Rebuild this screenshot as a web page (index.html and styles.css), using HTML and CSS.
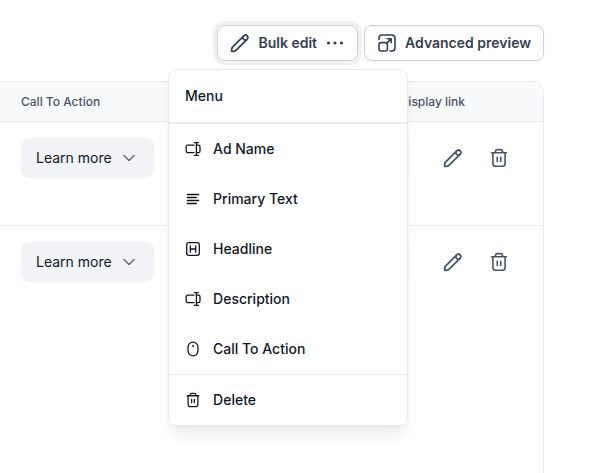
FILE: index.html
```html
<!DOCTYPE html>
<html lang="en">
<head>
    <meta charset="UTF-8">
    <meta name="viewport" content="width=device-width, initial-scale=1.0">
    <title>Bulk edit</title>
    <link rel="stylesheet" href="styles.css">
</head>
<body>
    <!-- Shared icons -->
    <svg class="sprite" aria-hidden="true">
        <symbol id="pencil" viewBox="0 0 20 20">
            <path d="M1.7 18.3V16.2Q1.8 14.8 2.8 13.8L13.8 2.8A2.4 2.4 0 0 1 17.2 6.2L6.2 17.2Q5.2 18.2 3.8 18.3Z"/>
            <path d="M12.9 3.7C12.6 6 14 7.4 16.3 7.1"/>
        </symbol>
        <symbol id="trash" viewBox="0 0 20 20">
            <path d="M2.6 4.7H17.4M6.4 4.5V3.8Q6.4 1.6 8.6 1.6H11.4Q13.6 1.6 13.6 3.8V4.5M3.9 4.9V15.5Q3.9 18.2 6.6 18.2H13.4Q16.1 18.2 16.1 15.5V4.9M8.3 9.2V13.4M11.7 9.2V13.4"/>
        </symbol>
        <symbol id="chevron" viewBox="0 0 20 20">
            <path d="M5 7.5 10 12.5 15 7.5"/>
        </symbol>
        <symbol id="text-input" viewBox="0 0 16 16">
            <path d="M9 4.2H2.8Q1.2 4.2 1.2 5.8V10Q1.2 11.6 2.8 11.6H9M11.4 1.6V14.4M9.4 1.6H13.4M9.4 14.4H13.4M11.6 4.2H13.4Q15 4.2 15 5.8V10Q15 11.6 13.4 11.6H11.6"/>
        </symbol>
    </svg>

    <div class="toolbar">
        <div class="dropdown">
            <button type="button" class="btn btn-active" aria-haspopup="menu" aria-expanded="true">
                <svg class="icon icon-bold"><use href="#pencil"/></svg>
                Bulk edit
                <svg class="icon dots" viewBox="0 0 20 20"><circle cx="3.5" cy="10" r="1.6"/><circle cx="10" cy="10" r="1.6"/><circle cx="16.5" cy="10" r="1.6"/></svg>
            </button>

            <div class="menu" role="menu">
                <div class="menu-title">Menu</div>
                <button type="button" class="menu-item" role="menuitem">
                    <svg class="icon-small"><use href="#text-input"/></svg>
                    Ad Name
                </button>
                <button type="button" class="menu-item" role="menuitem">
                    <svg class="icon-small" viewBox="0 0 16 16"><path d="M2.3 3.5H13.7M2.3 6.5H11.3M2.3 9.5H13.7M2.3 12.5H11.3"/></svg>
                    Primary Text
                </button>
                <button type="button" class="menu-item" role="menuitem">
                    <svg class="icon-small" viewBox="0 0 16 16"><rect x="1.7" y="1.7" width="12.6" height="12.6" rx="2"/><path d="M5.3 4.8V11.2M10.7 4.8V11.2M5.3 8H10.7"/></svg>
                    Headline
                </button>
                <button type="button" class="menu-item" role="menuitem">
                    <svg class="icon-small"><use href="#text-input"/></svg>
                    Description
                </button>
                <button type="button" class="menu-item" role="menuitem">
                    <svg class="icon-small" viewBox="0 0 16 16"><rect x="3" y="1.2" width="10" height="13.6" rx="5"/><path d="M8 4.3V5.7"/></svg>
                    Call To Action
                </button>
                <button type="button" class="menu-item menu-delete" role="menuitem">
                    <svg class="icon-small trash-small"><use href="#trash"/></svg>
                    Delete
                </button>
            </div>
        </div>

        <button type="button" class="btn">
            <svg class="icon" viewBox="0 0 20 20">
                <path d="M2 6.5V5.2Q2 2 5.2 2H14.8Q18 2 18 5.2V14.8Q18 18 14.8 18H13"/>
                <rect x="2" y="9.6" width="8.4" height="8.4" rx="2"/>
                <path d="M9.6 10.4 14.2 5.8M10.2 5.8H14.2V9.8"/>
            </svg>
            Advanced preview
        </button>
    </div>

    <div class="table-wrap">
        <table class="ads">
            <colgroup>
                <col class="col-cta">
                <col>
                <col class="col-actions">
            </colgroup>
            <thead>
                <tr>
                    <th scope="col">Call To Action</th>
                    <th scope="col" colspan="2" class="link-head">Display link</th>
                </tr>
            </thead>
            <tbody>
                <tr>
                    <td>
                        <div class="select">
                            <select aria-label="Call To Action"><option>Learn more</option></select>
                            <svg class="icon"><use href="#chevron"/></svg>
                        </div>
                    </td>
                    <td class="link-cell"><input class="link-input" type="text" aria-label="Display link"></td>
                    <td class="actions-cell">
                        <div class="actions">
                            <button type="button" class="icon-btn" aria-label="Edit"><svg class="icon icon-bold"><use href="#pencil"/></svg></button>
                            <button type="button" class="icon-btn" aria-label="Delete"><svg class="icon"><use href="#trash"/></svg></button>
                        </div>
                    </td>
                </tr>
                <tr>
                    <td>
                        <div class="select">
                            <select aria-label="Call To Action"><option>Learn more</option></select>
                            <svg class="icon"><use href="#chevron"/></svg>
                        </div>
                    </td>
                    <td class="link-cell"><input class="link-input" type="text" aria-label="Display link"></td>
                    <td class="actions-cell">
                        <div class="actions">
                            <button type="button" class="icon-btn" aria-label="Edit"><svg class="icon icon-bold"><use href="#pencil"/></svg></button>
                            <button type="button" class="icon-btn" aria-label="Delete"><svg class="icon"><use href="#trash"/></svg></button>
                        </div>
                    </td>
                </tr>
            </tbody>
        </table>
    </div>
</body>
</html>
```
FILE: styles.css
```css
* {
    box-sizing: border-box;
}

body {
    margin: 0;
    min-height: 100vh;
    padding: 25px 58px 0 0;
    display: flex;
    flex-direction: column;
    gap: 20px;
    background: #fff;
    color: #101828;
    font-family: Inter, sans-serif;
    font-size: 14px;
    line-height: 20px;
}

button,
input,
select {
    font: inherit;
    color: inherit;
}

button {
    cursor: pointer;
}

/* Icons */
.sprite {
    position: absolute;
    width: 0;
    height: 0;
}

.icon,
.icon-small {
    width: 20px;
    height: 20px;
    flex-shrink: 0;
    fill: none;
    stroke: currentColor;
    stroke-width: 1.6;
    stroke-linecap: round;
    stroke-linejoin: round;
}

.icon-bold {
    stroke-width: 1.8;
}

.icon-small {
    width: 16px;
    height: 16px;
    stroke-width: 1.3;
}

.trash-small {
    stroke-width: 1.6;
}

.dots {
    fill: currentColor;
    stroke: none;
}

/* Toolbar */
.toolbar {
    display: flex;
    justify-content: flex-end;
    gap: 6px;
}

.dropdown {
    position: relative;
}

.btn {
    display: flex;
    align-items: center;
    gap: 8px;
    height: 36px;
    padding: 0 12px;
    background: #fff;
    border: 1px solid #d0d0dd;
    border-radius: 8px;
    box-shadow: 0 1px 2px rgba(16, 24, 40, 0.05);
    color: #344054;
    font-weight: 600;
    white-space: nowrap;
}

.btn-active {
    box-shadow: 0 0 0 4px #f0f1f4, 0 1px 2px rgba(16, 24, 40, 0.05);
}

/* Menu opened under the button */
.menu {
    position: absolute;
    z-index: 1;
    top: calc(100% + 8px);
    right: -50px;
    width: 240px;
    overflow: hidden;
    background: #fff;
    border: 1px solid #e9eaf0;
    border-radius: 8px;
    box-shadow: 0 12px 16px -4px rgba(16, 24, 40, 0.08), 0 4px 6px -2px rgba(16, 24, 40, 0.03);
    color: #101828;
    font-weight: 500;
}

.menu-title {
    padding: 16px;
    border-bottom: 2px solid #e9eaf0;
}

.menu-item {
    display: flex;
    align-items: center;
    gap: 12px;
    width: 100%;
    height: 50px;
    padding: 0 16px;
    background: none;
    border: 0;
    text-align: left;
}

.menu-delete {
    height: 51px;
    border-top: 1px solid #e9eaf0;
}

/* Table */
.table-wrap {
    flex: 1;
    overflow: hidden;
    border: solid #eaecf0;
    border-width: 1px 1px 0 0;
    border-top-right-radius: 12px;
}

.ads {
    width: 100%;
    table-layout: fixed;
    border-collapse: separate;
    border-spacing: 0;
}

.col-cta {
    width: 175px;
}

.col-actions {
    width: 134px;
}

.ads th {
    height: 40px;
    padding: 0 0 0 21px;
    background: #f9fafb;
    border-bottom: 1px solid #eaecf0;
    color: #475467;
    font-size: 12px;
    font-weight: 500;
    text-align: left;
}

.ads .link-head {
    padding-right: 78px;
    text-align: right;
}

.ads td {
    padding: 16px 0 47px 21px;
    vertical-align: top;
}

.ads tbody tr:not(:last-child) td {
    border-bottom: 1px solid #eaecf0;
}

.ads .link-cell {
    padding-left: 0;
}

.ads .actions-cell {
    padding-left: 24px;
}

.select {
    display: grid;
    align-items: center;
    width: 133px;
}

.select select,
.select .icon {
    grid-area: 1 / 1;
}

.select select {
    appearance: none;
    height: 40px;
    padding: 0 36px 0 15px;
    background: #f2f3f7;
    border: 0;
    border-radius: 8px;
}

.select .icon {
    justify-self: end;
    margin-right: 15px;
    color: #667085;
    pointer-events: none;
}

.link-input {
    display: block;
    width: 100%;
    height: 40px;
    padding: 0 14px;
    background: #f2f3f7;
    border: 0;
}

.actions {
    display: flex;
    gap: 6px;
    height: 40px;
}

.icon-btn {
    display: flex;
    align-items: center;
    justify-content: center;
    width: 40px;
    padding: 0;
    background: none;
    border: 0;
    color: #475467;
}
```
